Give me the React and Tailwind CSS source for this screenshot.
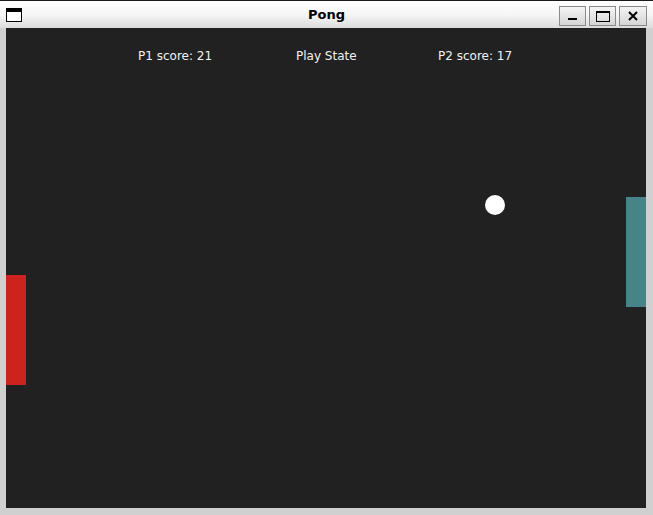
export default function App() {
  const font = { fontFamily: '"DejaVu Sans", sans-serif' };
  return (
    <div className="w-[653px] h-[515px] bg-[#d0d0d0] flex flex-col overflow-hidden" style={font}>
      {/* Title bar */}
      <div className="h-[28px] shrink-0 border-t border-[#1a1a1a] bg-gradient-to-b from-[#ffffff] via-[#f6f6f6] to-[#dcdcdc] grid grid-cols-[1fr_auto_1fr] items-center">
        <div className="flex">
          <div className="ml-[6px] mt-[1px] w-[16px] h-[14px] border border-black bg-white flex flex-col">
            <div className="h-[3px] bg-black" />
          </div>
        </div>
        <div className="text-center text-[13px] font-bold text-black leading-[16px]">Pong</div>
        <div className="flex justify-end gap-[3px] mr-[6px] mt-[3px]">
          <div className="w-[27px] h-[20px] border border-[#8a8a8a] bg-gradient-to-b from-[#f4f4f4] to-[#d6d6d6] flex items-end justify-center pb-[5px]">
            <div className="w-[9px] h-[2px] bg-black" />
          </div>
          <div className="w-[27px] h-[20px] border border-[#8a8a8a] bg-gradient-to-b from-[#f4f4f4] to-[#d6d6d6] flex items-center justify-center">
            <div className="w-[14px] h-[11px] border border-black border-t-[2px]" />
          </div>
          <div className="w-[28px] h-[20px] border border-[#8a8a8a] bg-gradient-to-b from-[#f4f4f4] to-[#d6d6d6] flex items-center justify-center">
            <svg width="10" height="10" viewBox="0 0 10 10">
              <path d="M1 1 L9 9 M9 1 L1 9" stroke="black" strokeWidth="2" />
            </svg>
          </div>
        </div>
      </div>
      {/* Body */}
      <div className="flex pl-[6px]">
        <div className="relative w-[640px] h-[480px] bg-[#212121] overflow-hidden">
          <div className="absolute left-[132px] top-[21px] text-[12px] leading-[14px] text-[#f2f2f2] whitespace-nowrap">P1 score: 21</div>
          <div className="absolute left-[290px] top-[21px] text-[12px] leading-[14px] text-[#f2f2f2] whitespace-nowrap">Play State</div>
          <div className="absolute left-[432px] top-[21px] text-[12px] leading-[14px] text-[#f2f2f2] whitespace-nowrap">P2 score: 17</div>
          <div className="absolute left-0 top-[247px] w-[20px] h-[110px] bg-[#cc241d]" />
          <div className="absolute left-[620px] top-[169px] w-[20px] h-[110px] bg-[#458588]" />
          <div className="absolute left-[479px] top-[167px] w-[20px] h-[20px] rounded-full bg-white" />
        </div>
      </div>
    </div>
  );
}
